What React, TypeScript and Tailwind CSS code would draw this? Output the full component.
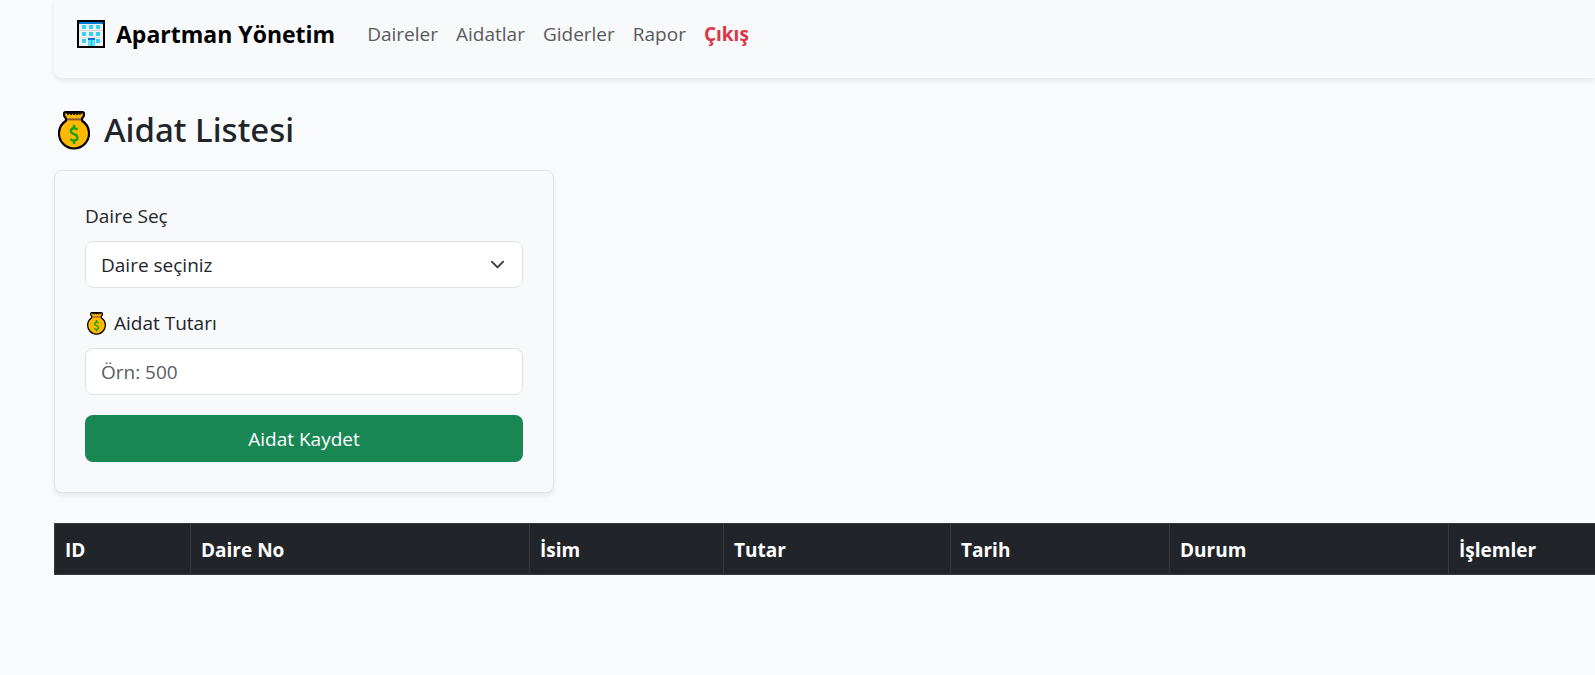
import React from "react";

function MoneyBag({ className }: { className: string }) {
  return (
    <svg viewBox="0 0 32 39" className={className} aria-hidden="true">
      <path
        d="M7.6 1.2 Q6.1 1.2 6.1 2.7 L6.1 4.3 Q6.1 4.9 6.5 5.4 L8 7.6 L8 9.8 A15 15 0 1 0 24 9.8 L24 7.6 L25.5 5.4 Q25.9 4.9 25.9 4.3 L25.9 2.7 Q25.9 1.2 24.4 1.2 Z"
        fill="#ffb900"
        stroke="#000"
        strokeWidth="2.2"
        strokeLinejoin="round"
      />
      <path
        d="M8.6 2.2 Q9.8 4.6 11.4 2.4 Q13.1 5 14.6 2.4 Q16 5 17.6 2.4 Q19.2 5 20.8 2.4 Q22.2 4.6 23.4 2.2"
        fill="#000"
        stroke="#000"
        strokeWidth="1"
      />
      <path d="M9 8.4 H23" stroke="#8e562e" strokeWidth="2" />
      <path
        d="M19.4 18.9 Q18.3 17.2 16 17.2 Q12.9 17.2 12.9 20 Q12.9 22.2 16 23.2 Q19.4 24.3 19.4 26.7 Q19.4 29.6 16 29.6 Q13.5 29.6 12.5 27.8 M16 13.7 V17.5 M16 29.4 V33"
        fill="none"
        stroke="#16a10c"
        strokeWidth="2.4"
      />
    </svg>
  );
}

function Building({ className }: { className: string }) {
  return (
    <svg viewBox="0 0 28 28" className={className} aria-hidden="true">
      <rect x="1" y="1" width="26" height="26" fill="#f2f2f2" stroke="#000" strokeWidth="2" />
      <rect x="2" y="2" width="24" height="2" fill="#0078d7" />
      <rect x="2" y="10" width="24" height="1" fill="#d2d2d2" />
      <rect x="2" y="17" width="24" height="1" fill="#e4e4e4" />
      <g fill="#31d2f7">
        <rect x="5" y="5" width="4" height="4" />
        <rect x="12" y="5" width="4" height="4" />
        <rect x="19" y="5" width="4" height="4" />
        <rect x="5" y="12" width="4" height="4" />
        <rect x="12" y="12" width="4" height="4" />
        <rect x="19" y="12" width="4" height="4" />
        <rect x="5" y="19" width="4" height="4" />
        <rect x="19" y="19" width="4" height="4" />
      </g>
      <rect x="11" y="18" width="7" height="8" fill="#50e0ff" />
      <rect x="11" y="18" width="7" height="2" fill="#0078d7" />
      <rect x="14" y="20" width="1" height="6" fill="#31b4e8" />
    </svg>
  );
}

const links = ["Daireler", "Aidatlar", "Giderler", "Rapor"];

const columns = [
  { label: "ID", width: "w-[136px]" },
  { label: "Daire No", width: "w-[339px]" },
  { label: "İsim", width: "w-[194px]" },
  { label: "Tutar", width: "w-[227px]" },
  { label: "Tarih", width: "w-[219px]" },
  { label: "Durum", width: "w-[279px]" },
  { label: "İşlemler", width: "w-[147px]" },
];

export default function App() {
  return (
    <div className="min-h-screen overflow-hidden bg-[#f8fafc] pl-[54px] font-['Open_Sans','Noto_Sans',sans-serif] text-[19px] leading-[30px] text-[#212529]">
      <nav className="flex items-center rounded-bl-lg bg-[#f8f9fb] pt-[13px] pb-[23px] pl-[23px] shadow-[0_3px_5px_rgba(0,0,0,0.075)]">
        <a href="#" className="mr-8 flex h-[42px] items-center gap-[11px] text-[23px] font-bold text-black">
          <Building className="size-7" />
          Apartman Yönetim
        </a>
        <ul className="flex items-center gap-[18px]">
          {links.map((label) => (
            <li key={label}>
              <a href="#" className="text-[#595a5b]">
                {label}
              </a>
            </li>
          ))}
          <li>
            <a href="#" className="font-bold text-[#dc3545]">
              Çıkış
            </a>
          </li>
        </ul>
      </nav>

      <main className="pt-7">
        <h1 className="flex items-center gap-3.5 pl-1 font-['Noto_Sans',sans-serif] text-[33px] leading-[48px] font-medium">
          <MoneyBag className="h-[39px] w-8" />
          Aidat Listesi
        </h1>

        <form
          className="mt-4 w-full max-w-[500px] rounded-lg border border-[#dee2e6] bg-[#f8f9fb] p-[30px] shadow-[0_3px_5px_rgba(0,0,0,0.075)]"
          onSubmit={(event) => event.preventDefault()}
        >
          <label htmlFor="daire" className="mb-2.5 block">
            Daire Seç
          </label>
          <div className="relative">
            <select
              id="daire"
              className="block h-[47px] w-full appearance-none rounded-lg border border-[#dee2e6] bg-white px-[15px] text-[#212529]"
            >
              <option>Daire seçiniz</option>
            </select>
            <svg
              viewBox="0 0 16 16"
              className="pointer-events-none absolute top-4 right-[18px] size-[15px]"
              fill="none"
              stroke="#343a40"
              strokeWidth="2"
              strokeLinecap="round"
              strokeLinejoin="round"
              aria-hidden="true"
            >
              <path d="m2 5 6 6 6-6" />
            </svg>
          </div>

          <label htmlFor="tutar" className="mt-5 mb-2.5 flex items-center gap-2 pl-0.5">
            <MoneyBag className="h-[23px] w-[19px]" />
            Aidat Tutarı
          </label>
          <input
            id="tutar"
            type="text"
            placeholder="Örn: 500"
            className="block h-[47px] w-full rounded-lg border border-[#dee2e6] bg-white px-[15px] placeholder:text-[#595c5f]"
          />

          <button type="submit" className="mt-5 block h-[47px] w-full rounded-lg bg-[#198754] text-white">
            Aidat Kaydet
          </button>
        </form>

        <table className="mt-[30px] w-full table-fixed border-separate border-spacing-0 bg-[#212529] text-white">
          <thead>
            <tr>
              {columns.map(({ label, width }) => (
                <th
                  key={label}
                  scope="col"
                  className={`${width} border-y border-l border-[#373b3e] px-2.5 pt-[11px] pb-[9px] text-left leading-[30px] font-bold`}
                >
                  {label}
                </th>
              ))}
            </tr>
          </thead>
        </table>
      </main>
    </div>
  );
}
